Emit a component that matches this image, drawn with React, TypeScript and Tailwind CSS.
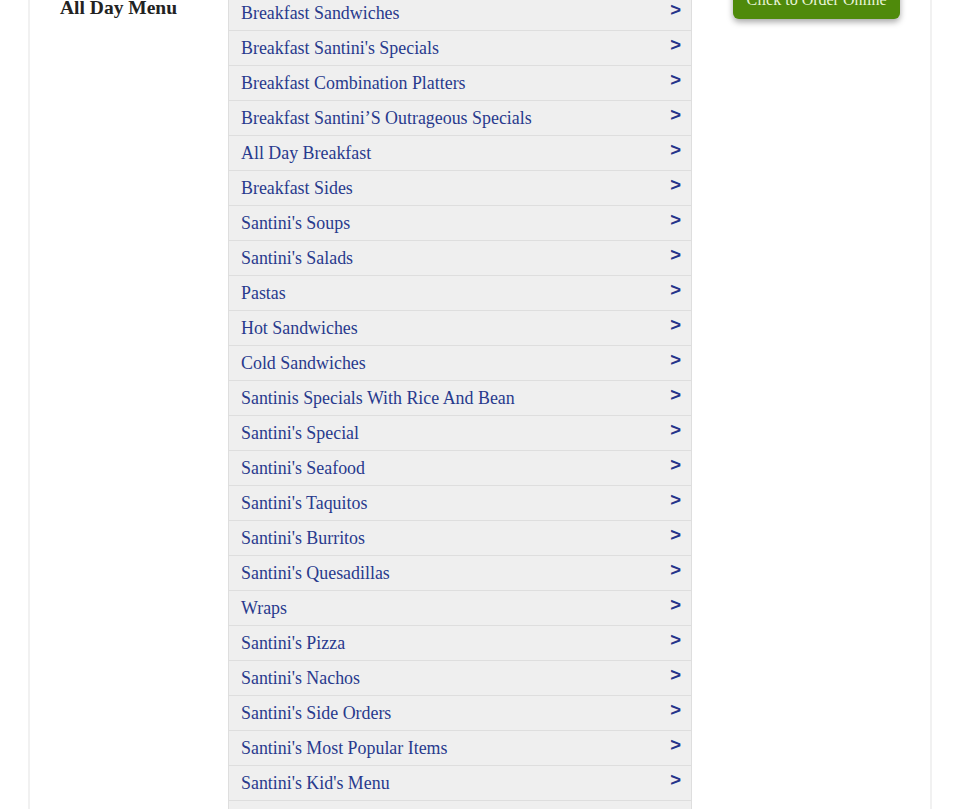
import React from "react";

const items = [
  "Breakfast Sandwiches",
  "Breakfast Santini's Specials",
  "Breakfast Combination Platters",
  "Breakfast Santini’S Outrageous Specials",
  "All Day Breakfast",
  "Breakfast Sides",
  "Santini's Soups",
  "Santini's Salads",
  "Pastas",
  "Hot Sandwiches",
  "Cold Sandwiches",
  "Santinis Specials With Rice And Bean",
  "Santini's Special",
  "Santini's Seafood",
  "Santini's Taquitos",
  "Santini's Burritos",
  "Santini's Quesadillas",
  "Wraps",
  "Santini's Pizza",
  "Santini's Nachos",
  "Santini's Side Orders",
  "Santini's Most Popular Items",
  "Santini's Kid's Menu",
  "Santini's Desserts",
  "Santini's Beverages",
];

export default function App() {
  return (
    <div className="h-[809px] overflow-hidden bg-white" style={{ fontFamily: '"Liberation Serif", serif' }}>
      <div className="ml-[28px] w-[904px] border-x-2 border-[#f1f1f1] h-[900px] flex items-start pl-[30px]">
        <div className="w-[168px] shrink-0 mt-[-3px]">
          <h2 className="text-[19.5px] leading-[22px] font-bold text-[#222]">All Day Menu</h2>
        </div>
        <div className="w-[464px] shrink-0 mt-[-4px] border-x border-[#dedede]">
          {items.map((t) => (
            <div key={t} className="h-[35px] bg-[#efefef] border-b border-[#dedede] flex justify-between pl-[12px] pr-[10px]">
              <span className="pt-[7px] text-[17.9px] leading-[20px] text-[#283a8d]">{t}</span>
              <span
                className="pt-[4px] text-[18.5px] leading-[20px] font-bold text-[#25338a]"
                style={{ fontFamily: '"Liberation Sans", Arial, sans-serif' }}
              >
                &gt;
              </span>
            </div>
          ))}
        </div>
        <div className="ml-[41px] w-[167px] shrink-0 mt-[-17px]">
          <button className="w-full bg-[#4f8a0b] text-[#e8f5d8] text-[16px] leading-[18px] pt-[8px] pb-[10px] rounded-b-[6px] rounded-t-[6px] shadow-[0_3px_6px_rgba(0,0,0,0.35)]">
            Click to Order Online
          </button>
        </div>
      </div>
    </div>
  );
}
